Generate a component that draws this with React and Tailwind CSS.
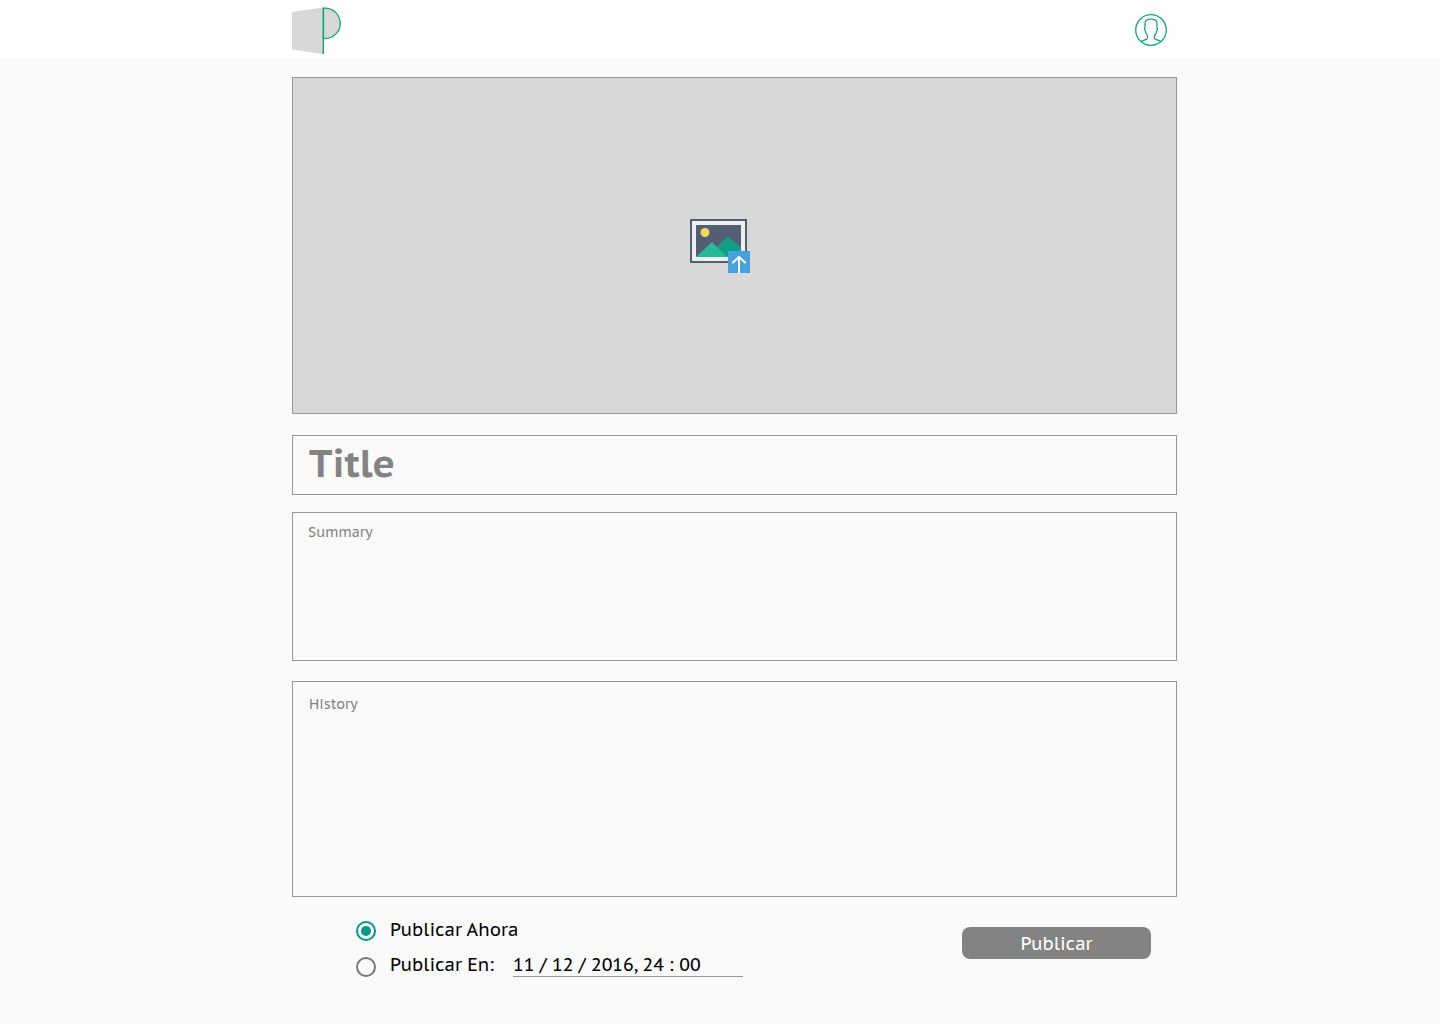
import { useState } from "react";

function Logo() {
  return (
    <svg width="50" height="48" viewBox="0 0 50 48" aria-hidden="true">
      <path d="M0 5 31 .5V47L0 42.5Z" fill="#d8d8d8" />
      <path d="M31.500 1.200H33a15.200 15.200 0 0 1 0 30.400H31.500Z" fill="#d8d8d8" stroke="#10a870" strokeWidth="1.300" />
      <path d="M31.300 .8V47" stroke="#10a870" strokeWidth="1.400" />
    </svg>
  );
}

function UserIcon() {
  return (
    <svg width="32" height="32" viewBox="0 0 32 32" fill="none" stroke="#12a970" strokeWidth="1.300" aria-hidden="true">
      <circle cx="16" cy="16" r="15.300" />
      <path d="M6.300 27.600c1.800-1.200 4.700-1.800 5.900-2.900.8-.8.6-2.200.1-3.200-1.300-1.500-1.900-3.200-2.100-5-.6-.7-.7-2.100-.2-2.900V9.500c0-3 1.800-4.400 6-4.400s6 1.400 6 4.400v4.100c.5.800.4 2.200-.2 2.900-.2 1.800-.8 3.500-2.100 5-.5 1-.7 2.400.1 3.200 1.200 1.100 4.100 1.700 5.900 2.900" />
    </svg>
  );
}

function UploadPicture() {
  return (
    <svg width="60" height="54" viewBox="0 0 60 54" aria-hidden="true">
      <path d="M0 0H57V44H0Z" fill="#545e73" />
      <path d="M2 2H55V42H2Z" fill="#ecf0f1" />
      <path d="M6 6H51V38H6Z" fill="#545e73" />
      <circle cx="15" cy="13.500" r="4.500" fill="#f3d55b" />
      <path d="M27 28 38 17 51 29V38H27Z" fill="#11a085" />
      <path d="M6 38 22 23 37 38Z" fill="#26b999" />
      <path d="M38 32H60V54H38Z" fill="#48a0dc" />
      <path d="M49 54V38M43 43.500 49 38 55 43.500" fill="none" stroke="#fff" strokeWidth="2" strokeLinecap="round" strokeLinejoin="round" />
    </svg>
  );
}

const radio =
  "size-5 shrink-0 appearance-none rounded-full border-2 border-[#757575] bg-clip-content p-[3px] checked:border-[#009688] checked:bg-[#009688]";
const box =
  "block w-full border border-[#979797] bg-transparent text-[#838383] placeholder:text-[#838383] outline-none";

export default function App() {
  const [when, setWhen] = useState("now");
  return (
    <div className="min-h-screen bg-[#fafafa] font-['PT_Sans_Caption','Noto_Sans',sans-serif] text-black">
      <header className="bg-white">
        <div className="mx-auto flex h-[58px] max-w-[914px] items-center justify-between pt-[2px] pr-[10px] pl-[29px]">
          <a href="#" aria-label="Home" className="pt-[2px]">
            <Logo />
          </a>
          <button type="button" aria-label="Account">
            <UserIcon />
          </button>
        </div>
      </header>

      <main className="mx-auto max-w-[914px] pt-[19px] pb-8 pl-[29px]">
        <form onSubmit={(e) => e.preventDefault()}>
          <label className="flex h-[337px] cursor-pointer items-center justify-center border border-[#979797] bg-[#d8d8d8] pr-[29px]">
            <input type="file" accept="image/*" aria-label="Upload picture" className="sr-only" />
            <UploadPicture />
          </label>

          <input
            type="text"
            aria-label="Title"
            placeholder="Title"
            className={`${box} mt-[21px] h-[60px] px-4 pb-[6px] text-[38px] leading-[52px] font-bold`}
          />
          <textarea
            aria-label="Summary"
            placeholder="Summary"
            className={`${box} mt-[17px] h-[149px] resize-none px-[15px] pt-[9px] text-sm`}
          />
          <textarea
            aria-label="History"
            placeholder="History"
            className={`${box} mt-5 h-[216px] resize-none px-4 pt-3 text-sm`}
          />

          <div className="flex items-start justify-between pt-4 pr-[26px] pl-16 text-lg">
            <div>
              <label className="flex h-9 items-center gap-[14px]">
                <input type="radio" name="when" checked={when === "now"} onChange={() => setWhen("now")} className={radio} />
                <span className="pb-[2px]">Publicar Ahora</span>
              </label>
              <div className="flex h-9 items-center">
                <label className="flex w-[157px] items-center gap-[14px]">
                  <input type="radio" name="when" checked={when === "later"} onChange={() => setWhen("later")} className={radio} />
                  <span className="pb-1">Publicar En:</span>
                </label>
                <div className="pb-1">
                  <input
                    type="text"
                    aria-label="Publicar En"
                    defaultValue="11 / 12 / 2016, 24 : 00"
                    className="block h-6 w-[230px] border-b border-[#979797] bg-transparent outline-none"
                  />
                </div>
              </div>
            </div>
            <button type="submit" className="mt-[14px] h-8 w-[189px] rounded-lg bg-[#838383] pt-[2px] text-white">
              Publicar
            </button>
          </div>
        </form>
      </main>
    </div>
  );
}
